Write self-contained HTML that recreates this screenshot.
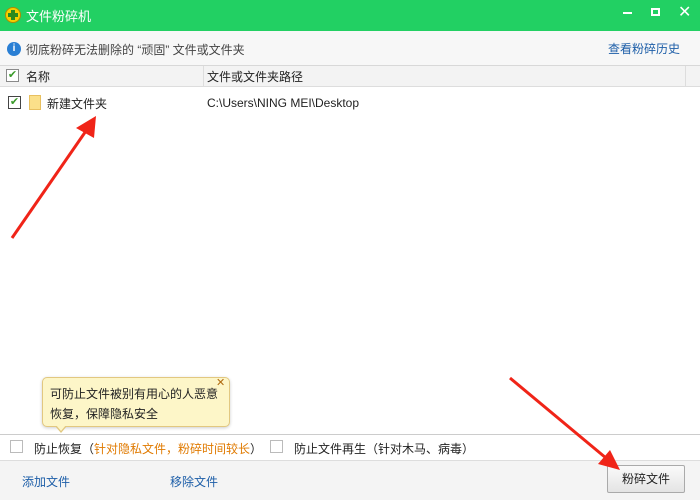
<!DOCTYPE html>
<html><head><meta charset="utf-8"><style>
*{margin:0;padding:0;box-sizing:border-box}
body{width:700px;height:500px;position:relative;overflow:hidden;background:#fff;font-family:"Liberation Sans","Noto Sans CJK SC",sans-serif;font-size:12px;color:#222}
.a{position:absolute}
.cb{position:absolute;width:13px;height:13px;border:1px solid #8a8a8a;background:#fff}
</style></head><body>
<div class="a" style="left:0;top:0;width:700px;height:31px;background:#22d063"></div>
<div class="a" style="left:5px;top:7px;width:16px;height:16px;border-radius:50%;background:#f5d000;border:1px solid #b08a00"></div>
<div class="a" style="left:11px;top:10px;width:4px;height:10px;background:#2a8a1e"></div>
<div class="a" style="left:8px;top:13px;width:10px;height:4px;background:#2a8a1e"></div>
<div class="a" style="left:26px;top:6px;color:#fff;font-size:13px">文件粉碎机</div>
<div class="a" style="left:623px;top:12px;width:9px;height:2px;background:#fff"></div>
<div class="a" style="left:651px;top:8px;width:9px;height:8px;border:2px solid #fff"></div>
<div class="a" style="left:678px;top:2px;color:#fff;font-size:16px">✕</div>
<div class="a" style="left:0;top:31px;width:700px;height:35px;background:#f7f7f7"></div>
<div class="a" style="left:7px;top:42px;width:14px;height:14px;border-radius:50%;background:#2a7fd4;color:#fff;font-size:10px;font-weight:bold;text-align:center;line-height:14px">i</div>
<div class="a" style="left:26px;top:41px;color:#444">彻底粉碎无法删除的 “顽固” 文件或文件夹</div>
<div class="a" style="left:608px;top:40px;color:#1d5ea8">查看粉碎历史</div>
<div class="a" style="left:0;top:65px;width:700px;height:22px;background:#f3f3f3;border-top:1px solid #d8d8d8;border-bottom:1px solid #ddd"></div>
<div class="a" style="left:203px;top:66px;width:1px;height:20px;background:#ddd"></div>
<div class="a" style="left:685px;top:66px;width:1px;height:20px;background:#ddd"></div>
<div class="cb" style="left:6px;top:69px;color:#3a9a2a;font-size:11px;line-height:11px;text-align:center">✔</div>
<div class="a" style="left:26px;top:68px">名称</div>
<div class="a" style="left:207px;top:68px">文件或文件夹路径</div>
<div class="cb" style="left:8px;top:96px;border-color:#444;color:#3a9a2a;font-size:11px;line-height:11px;text-align:center">✔</div>
<div class="a" style="left:29px;top:95px;width:12px;height:15px;background:#fbe08a;border:1px solid #e8c060"></div>
<div class="a" style="left:47px;top:95px">新建文件夹</div>
<div class="a" style="left:207px;top:96px">C:\Users\NING MEI\Desktop</div>
<div class="a" style="left:42px;top:377px;width:188px;height:50px;background:#fdf6c8;border:1px solid #e2c880;border-radius:5px;box-shadow:0 1px 3px rgba(0,0,0,.2)"></div>
<div class="a" style="left:55px;top:426px;width:0;height:0;border-left:6px solid transparent;border-right:6px solid transparent;border-top:7px solid #e2c880"></div>
<div class="a" style="left:56px;top:425px;width:0;height:0;border-left:5px solid transparent;border-right:5px solid transparent;border-top:6px solid #fdf6c8"></div>
<div class="a" style="left:216px;top:376px;color:#b06a10;font-size:11px">✕</div>
<div class="a" style="left:50px;top:384px;line-height:20px">可防止文件被别有用心的人恶意<br>恢复，保障隐私安全</div>
<div class="a" style="left:0;top:434px;width:700px;height:1px;background:#ccc"></div>
<div class="cb" style="left:10px;top:440px;border-color:#bbb"></div>
<div class="a" style="left:34px;top:440px">防止恢复（<span style="color:#e07a00">针对隐私文件，粉碎时间较长</span>）</div>
<div class="cb" style="left:270px;top:440px;border-color:#bbb"></div>
<div class="a" style="left:294px;top:440px">防止文件再生（针对木马、病毒）</div>
<div class="a" style="left:0;top:460px;width:700px;height:40px;background:#f4f4f4;border-top:1px solid #ddd"></div>
<div class="a" style="left:22px;top:473px;color:#1d5ea8">添加文件</div>
<div class="a" style="left:170px;top:473px;color:#1d5ea8">移除文件</div>
<div class="a" style="left:607px;top:465px;width:78px;height:28px;background:linear-gradient(#fafafa,#e4e4e4);border:1px solid #aaa;border-radius:2px;text-align:center;line-height:26px">粉碎文件</div>
<svg class="a" style="left:0;top:0" width="700" height="500">
<line x1="12" y1="238" x2="88" y2="128" stroke="#f02418" stroke-width="3"/>
<polygon points="96,116 76,128 94,138" fill="#f02418"/>
<line x1="510" y1="378" x2="606" y2="458" stroke="#f02418" stroke-width="3"/>
<polygon points="620,470 598,464 610,450" fill="#f02418"/>
</svg>
</body></html>
